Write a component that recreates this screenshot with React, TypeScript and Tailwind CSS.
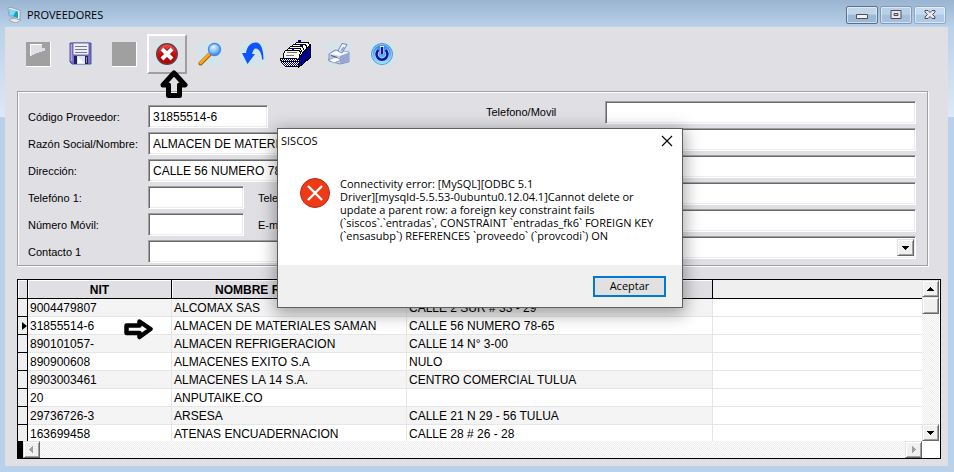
import React from "react";

const suppliers = [
  { nit: "9004479807", name: "ALCOMAX SAS", address: "CALLE 2 SUR # 33 - 29" },
  { nit: "31855514-6", name: "ALMACEN DE MATERIALES SAMAN", address: "CALLE 56 NUMERO 78-65" },
  { nit: "890101057-", name: "ALMACEN REFRIGERACION", address: "CALLE 14 N° 3-00" },
  { nit: "890900608", name: "ALMACENES EXITO S.A", address: "NULO" },
  { nit: "8903003461", name: "ALMACENES LA 14 S.A.", address: "CENTRO COMERCIAL TULUA" },
  { nit: "20", name: "ANPUTAIKE.CO", address: "" },
  { nit: "29736726-3", name: "ARSESA", address: "CALLE 21 N 29 - 56 TULUA" },
  { nit: "163699458", name: "ATENAS ENCUADERNACION", address: "CALLE 28 # 26 - 28" },
];

const currentNit = "31855514-6";

const sunken =
  "h-[23px] border border-t-[#a0a0a0] border-l-[#a0a0a0] border-b-white border-r-white bg-white shadow-[inset_1px_1px_0_#696969,inset_-1px_-1px_0_#ececec]";
const raised =
  "flex h-[17px] w-[17px] shrink-0 items-center justify-center border border-t-[#e3e3e3] border-l-[#e3e3e3] border-b-[#696969] border-r-[#696969] bg-[#f0f0f0] shadow-[inset_1px_1px_0_#fff,inset_-1px_-1px_0_#a0a0a0]";
const track = "bg-[repeating-conic-gradient(#ececec_0_25%,#ffffff_0_50%)] bg-[length:2px_2px]";
const arialStack = "font-['Liberation_Sans',Arial,sans-serif]";
const segoeStack = "font-['Open_Sans',sans-serif]";

function Field({
  id,
  label,
  value = "",
  width,
  children,
}: {
  id: string;
  label: string;
  value?: string;
  width: string;
  children?: React.ReactNode;
}) {
  return (
    <div className="flex items-center">
      <label htmlFor={id} className="w-[120px] shrink-0">
        {label}
      </label>
      <input id={id} type="text" defaultValue={value} className={`${sunken} ${width} ${arialStack} px-1 text-[12px] outline-none`} />
      {children}
    </div>
  );
}

function Triangle({ dir, color = "#000" }: { dir: "up" | "down" | "left" | "right"; color?: string }) {
  const paths = {
    up: "M0 6h7v-1h-1v-1h-1v-1h-1v-1h-1v1h-1v1h-1v1h-1z",
    down: "M0 2h7v1h-1v1h-1v1h-1v1h-1v-1h-1v-1h-1v-1h-1z",
    left: "M5 0v7h-1v-1h-1v-1h-1v-1h-1v-1h1v-1h1v-1h1v-1z",
    right: "M2 0v7h1v-1h1v-1h1v-1h1v-1h-1v-1h-1v-1h-1v-1z",
  };
  return (
    <svg width="7" height="7" viewBox="0 0 7 7" fill={color} shapeRendering="crispEdges">
      <path d={paths[dir]} />
    </svg>
  );
}

function MonitorIcon() {
  return (
    <svg width="16" height="16" viewBox="0 0 16 16">
      <path d="M3 12l6-1 5 2-5 3-6-2z" fill="#e9e9e4" stroke="#8f969c" strokeWidth=".7" />
      <path d="M1 1l3-.5 9 3v8l-2 1-9-4z" fill="#f2f6f8" stroke="#7c8c99" strokeWidth=".7" />
      <path d="M2 2l9 2.500v7l-8.500-3.500z" fill="#1c9ecb" />
      <path d="M2 2l7 2-3 5-3.500-1.500z" fill="#7fdcf2" />
    </svg>
  );
}

function NewIcon() {
  return (
    <svg width="26" height="26" viewBox="0 0 26 26" shapeRendering="crispEdges">
      <path d="M1 1h25v25h-25z" fill="#fff" />
      <path d="M1 1h24v24h-24z" fill="#a0a0a0" />
      <path d="M5 3h12v4h3v3h-3v1h-3v1h-3v1h-2v1h-2v1h-2z" fill="#e0dfe4" />
      <path d="M5 3.500h12M5.500 3v11" stroke="#fff" fill="none" />
    </svg>
  );
}

function DisabledIcon() {
  return (
    <svg width="26" height="26" viewBox="0 0 26 26" shapeRendering="crispEdges">
      <path d="M1 1h25v25h-25z" fill="#fff" />
      <path d="M1 1h24v24h-24z" fill="#a0a0a0" />
    </svg>
  );
}

function SaveIcon() {
  return (
    <svg width="24" height="24" viewBox="0 0 24 24">
      <path d="M0 0h24v24h-24z" fill="#d4e5e9" />
      <path d="M1 1h21v21h-19l-2-2z" fill="#7a6fc4" stroke="#5a4e9b" />
      <path d="M2.500 2v17" stroke="#b0a4ea" strokeWidth="1.500" />
      <path d="M4 1h16v12h-16z" fill="#eeeef6" stroke="#5a4e9b" strokeWidth=".8" />
      <path d="M6 4.500h12M6 7.500h12M6 10.500h12" stroke="#77778e" />
      <path d="M5 14h14v8h-14z" fill="#20205a" />
      <path d="M8 14h8v8h-8z" fill="#dfe5ef" />
      <path d="M9 15l6 6h-6z" fill="#fff" />
      <path d="M17 15h1v6h-1z" fill="#8d86c7" />
    </svg>
  );
}

function DeleteIcon() {
  return (
    <svg width="24" height="24" viewBox="0 0 24 24">
      <defs>
        <linearGradient id="del" x1="0" y1="0" x2="0" y2="1">
          <stop offset="0" stopColor="#ef5a55" />
          <stop offset=".5" stopColor="#cf0b0b" />
          <stop offset="1" stopColor="#b00000" />
        </linearGradient>
      </defs>
      <path d="M0 0h24v24h-24z" fill="#d4e5e9" />
      <circle cx="12" cy="12" r="10.300" fill="url(#del)" stroke="#6e3a44" strokeWidth="1.400" />
      <path d="M7.500 7.500l9 9M16.500 7.500l-9 9" stroke="#8c1010" strokeWidth="5.500" />
      <path d="M7 7l10 10M17 7l-10 10" stroke="#fff" strokeWidth="4" />
    </svg>
  );
}

function SearchIcon() {
  return (
    <svg width="24" height="24" viewBox="0 0 24 24">
      <defs>
        <radialGradient id="lens" cx=".4" cy=".3" r=".7">
          <stop offset="0" stopColor="#e4f5ff" />
          <stop offset=".6" stopColor="#7fbdf8" />
          <stop offset="1" stopColor="#3d7fe8" />
        </radialGradient>
      </defs>
      <path d="M0 0h24v24h-24z" fill="#d4e5e9" />
      <path d="M2.500 21.500l9-9" stroke="#a95e05" strokeWidth="4" strokeLinecap="round" />
      <path d="M2.500 21l9-9" stroke="#f9aa1c" strokeWidth="2.500" strokeLinecap="round" />
      <circle cx="16.500" cy="7.500" r="6" fill="url(#lens)" stroke="#4a86e6" strokeWidth="1.300" />
    </svg>
  );
}

function UndoIcon() {
  return (
    <svg width="24" height="24" viewBox="0 0 24 24">
      <path d="M0 0h24v24h-24z" fill="#d4e5e9" />
      <path d="M1 11h4c1-6 4-10.500 10-10.500 5 0 7.500 7 7.500 17h-1.500c0-6-3-11-6-11-2 0-3 2-4 5.500h3l-7.500 10z" fill="#0b55ff" />
    </svg>
  );
}

function FileBoxIcon() {
  return (
    <svg width="32" height="30" viewBox="0 0 32 30" shapeRendering="crispEdges">
      <defs>
        <pattern id="weave" width="2" height="2" patternUnits="userSpaceOnUse">
          <path d="M0 0h2v2h-2z" fill="#fff" />
          <path d="M0 0h1v1h-1zM1 1h1v1h-1z" fill="#00009c" />
        </pattern>
      </defs>
      <path d="M14 4h14l3 2-9 15h-17v-7z" fill="#fff" />
      <path d="M16.500 3.500h12l1 3M13.500 5.500h12l2 4M10.500 7.500h12l2 5M8.500 9.500h12l2 5" fill="none" stroke="#000" />
      <path d="M14.500 5.500l2-2M11.500 7.500l2-2M8.500 9.500l2-2M5.500 12.500l3-3" stroke="#000" />
      <path d="M18 1h3v2h-3zM20 6h3v1h-3zM12 9h2v2h-2z" fill="#00009c" />
      <path d="M3.500 20.500v-6l2-3h14l1 2-2 7z" fill="#f5f5f5" stroke="#000" />
      <path d="M7 13.500h10M6 16.500h8" stroke="#777" />
      <path d="M19.500 17.500l11-12v13l-12 10z" fill="#00008a" stroke="#000" />
      <path d="M.5 19.500h16l3 2-1 6h-13l-4-4z" fill="url(#weave)" stroke="#000" />
      <path d="M2 22.500h17" stroke="#000" />
    </svg>
  );
}

function PrinterIcon() {
  return (
    <svg width="24" height="24" viewBox="0 0 24 24">
      <path d="M0 0h24v24h-24z" fill="#d4e5e9" />
      <path d="M2 12l6-4 14 2v10l-9 2-11-3z" fill="#c1c9e6" stroke="#7d88b4" strokeWidth=".9" />
      <path d="M3 12l6-3 13 1-9 4z" fill="#f6f8ff" />
      <path d="M13 14l9-3v8l-9 3z" fill="#98a6d3" />
      <path d="M15 1.500l5 1-5 8.500-4-2z" fill="#f4f7ff" stroke="#7180ba" />
      <path d="M17 5l-3 4" stroke="#8fa4df" strokeWidth="2" />
      <path d="M1 18l8-3 5 3-7 3z" fill="#fff" stroke="#8490b8" strokeWidth=".8" />
      <path d="M4 13.500l6 2" stroke="#414f83" />
    </svg>
  );
}

function PowerIcon() {
  return (
    <svg width="24" height="24" viewBox="0 0 24 24">
      <defs>
        <linearGradient id="pow" x1="0" y1="0" x2="0" y2="1">
          <stop offset="0" stopColor="#2f83e8" />
          <stop offset=".5" stopColor="#4ba5f4" />
          <stop offset="1" stopColor="#8ff0ff" />
        </linearGradient>
      </defs>
      <path d="M0 0h24v24h-24z" fill="#d4e5e9" />
      <circle cx="12" cy="12" r="10.500" fill="url(#pow)" stroke="#5f94cf" />
      <circle cx="12" cy="12" r="9.500" fill="none" stroke="#a5dcff" strokeWidth=".8" />
      <path d="M8.500 8a5.500 5.500 0 1 0 7 0" fill="none" stroke="#bfe4ff" strokeWidth="4" />
      <path d="M12 4v8" stroke="#e6f6ff" strokeWidth="4" />
      <path d="M8.500 8a5.500 5.500 0 1 0 7 0" fill="none" stroke="#1212a8" strokeWidth="2.600" />
      <path d="M12 5v7" stroke="#1212a8" strokeWidth="2.600" />
    </svg>
  );
}

const tools = [
  { name: "Nuevo", Icon: NewIcon, active: false },
  { name: "Guardar", Icon: SaveIcon, active: false },
  { name: "Modificar", Icon: DisabledIcon, active: false },
  { name: "Eliminar", Icon: DeleteIcon, active: true },
  { name: "Buscar", Icon: SearchIcon, active: false },
  { name: "Deshacer", Icon: UndoIcon, active: false },
  { name: "Archivo", Icon: FileBoxIcon, active: false },
  { name: "Imprimir", Icon: PrinterIcon, active: false },
  { name: "Salir", Icon: PowerIcon, active: false },
];

function TitleBar() {
  const caption =
    "flex h-[18px] w-8 items-center justify-center rounded-[2px] border shadow-[inset_0_0_0_1px_rgba(255,255,255,0.5)]";
  return (
    <header className="flex h-[27px] items-start justify-between pr-2 pl-[7px]">
      <div className="flex h-[30px] items-center gap-1">
        <MonitorIcon />
        <h1 className={`${segoeStack} text-[11px] leading-4 text-black`}>PROVEEDORES</h1>
      </div>
      <div className="flex gap-0.5 pt-1.5">
        <button aria-label="Minimizar" className={`${caption} border-[#5d6e89] bg-linear-to-b from-[#c2d6ea] from-45% to-[#9db8d4] to-50%`}>
          <svg width="12" height="12" viewBox="0 0 12 12">
            <path d="M.5 5.500h11v4h-11z" fill="#f2f2f2" stroke="#4c4d5e" />
          </svg>
        </button>
        <button aria-label="Maximizar" className={`${caption} border-[#8299b8] bg-linear-to-b from-[#b9cfe6] from-45% to-[#a5bfdc] to-50%`}>
          <svg width="12" height="12" viewBox="0 0 12 12">
            <path fillRule="evenodd" d="M1 1.500h10v8h-10zM4 4.500v2h4v-2z" fill="#e8e8e8" stroke="#4c4d5e" />
          </svg>
        </button>
        <button aria-label="Cerrar ventana" className={`${caption} border-[#8fa8c8] bg-linear-to-b from-[#c6dbf1] from-45% to-[#b0cae6] to-50%`}>
          <svg width="12" height="12" viewBox="0 0 12 12">
            <path d="M1 1.500h3l2 2 2-2h3v1.500l-2.500 2.500 2.500 2.500v1.500h-3l-2-2-2 2h-3v-1.500l2.500-2.500-2.500-2.500z" fill="#e8e8e8" stroke="#4c4d5e" />
          </svg>
        </button>
      </div>
    </header>
  );
}

function SupplierForm() {
  const side = "ml-3.5";
  return (
    <section className={`${arialStack} mt-[17px] mr-5 ml-3 flex border border-[#a0a0a0] pr-[11px] pb-0.5 pl-2.5 text-[11px] leading-4 text-black shadow-[1px_1px_0_#fff,inset_1px_1px_0_#fff]`}>
      <div className="flex w-[458px] shrink-0 flex-col gap-1 pt-[13px]">
        <Field id="codigo" label="Código Proveedor:" value="31855514-6" width="w-[120px]" />
        <Field id="razon" label="Razón Social/Nombre:" value="ALMACEN DE MATERIALES SAMAN" width="w-[300px]" />
        <Field id="direccion" label="Dirección:" value="CALLE 56 NUMERO 78-65" width="w-[300px]" />
        <Field id="telefono1" label="Telefóno 1:" width="w-24">
          <span className={side}>Telefóno 2:</span>
        </Field>
        <Field id="movil" label="Número Móvil:" width="w-24">
          <span className={side}>E-mail:</span>
        </Field>
        <Field id="contacto" label="Contacto 1" width="w-[300px]" />
      </div>
      <div className="flex min-w-0 flex-1 pt-[9px]">
        <label htmlFor="telmovil" className="mt-[3px] w-[119px] shrink-0">
          Telefono/Movil
        </label>
        <div className="flex min-w-0 flex-1 flex-col gap-1">
          <input id="telmovil" type="text" className={`${sunken} w-full px-1 outline-none`} />
          <input aria-label="Dato 2" type="text" className={`${sunken} w-full px-1 outline-none`} />
          <input aria-label="Dato 3" type="text" className={`${sunken} w-full px-1 outline-none`} />
          <input aria-label="Dato 4" type="text" className={`${sunken} w-full px-1 outline-none`} />
          <input aria-label="Dato 5" type="text" className={`${sunken} w-full px-1 outline-none`} />
          <div className={`${sunken} flex items-center p-px`}>
            <select aria-label="Dato 6" className="h-4 min-w-0 flex-1 appearance-none bg-transparent px-1 outline-none">
              <option></option>
            </select>
            <span className={raised}>
              <Triangle dir="down" />
            </span>
          </div>
        </div>
      </div>
    </section>
  );
}

function SupplierGrid() {
  const head = "h-[19px] border-r border-b border-black bg-[#e0dfe4] px-0 pt-px pb-0 text-center font-bold shadow-[inset_1px_1px_0_#fff]";
  const cell = "h-[18px] border-r border-b border-[#e6e6e6] pt-px pr-0 pb-0 pl-0.5 whitespace-nowrap";
  return (
    <section className={`${arialStack} mt-[13px] mr-[7px] mb-[7px] ml-3 border border-black bg-white text-[12px] leading-4 text-black`}>
      <div className="flex h-[161px]">
        <div className="min-w-0 flex-1 overflow-hidden">
          <table className="w-full table-fixed border-separate border-spacing-0">
            <colgroup>
              <col className="w-2.5" />
              <col className="w-36" />
              <col className="w-[235px]" />
              <col className="w-[306px]" />
              <col />
            </colgroup>
            <thead>
              <tr>
                <th aria-label="Registro" className={head} />
                <th className={head}>NIT</th>
                <th className={head}>NOMBRE RAZON SOCIAL</th>
                <th aria-label="Dirección" className={head} />
                <th aria-label="Otros" className="h-[19px] border-b border-black bg-[#efefef] p-0" />
              </tr>
            </thead>
            <tbody>
              {suppliers.map((s, i) => (
                <tr key={s.nit} className={i % 2 === 0 ? "bg-[#f4f4f4]" : "bg-white"}>
                  <td className="h-[18px] border-r border-b border-black bg-[#efefef] p-0">
                    {s.nit === currentNit && (
                      <svg width="5" height="8" viewBox="0 0 5 8" className="ml-auto block">
                        <path d="M0 0l5 4-5 4z" />
                      </svg>
                    )}
                  </td>
                  <td className={cell}>{s.nit}</td>
                  <td className={cell}>{s.name}</td>
                  <td className={cell}>{s.address}</td>
                  <td className="h-[18px] border-b border-[#e6e6e6] bg-white p-0" />
                </tr>
              ))}
            </tbody>
          </table>
        </div>
        <div className={`${track} mr-px flex w-[17px] flex-col`}>
          <button aria-label="Subir" className={raised}>
            <Triangle dir="up" />
          </button>
          <div className={raised} />
          <button aria-label="Bajar" className={`${raised} mt-auto`}>
            <Triangle dir="down" />
          </button>
        </div>
      </div>
      <div className="flex h-[17px]">
        <div className="w-[5px] bg-black" />
        <div className={`${track} mr-[18px] flex flex-1 justify-between`}>
          <button aria-label="Izquierda" className={raised}>
            <Triangle dir="left" color="#a0a0a0" />
          </button>
          <button aria-label="Derecha" className={raised}>
            <Triangle dir="right" color="#a0a0a0" />
          </button>
        </div>
      </div>
    </section>
  );
}

function ErrorDialog() {
  return (
    <div
      role="alertdialog"
      aria-labelledby="dlg-title"
      aria-describedby="dlg-text"
      className={`${segoeStack} absolute top-32 left-[277px] w-[406px] border border-[#5f5f5f] bg-white text-[11px] text-black shadow-[0_4px_16px_2px_rgba(0,0,0,0.35)]`}
    >
      <div className="flex h-6 items-center justify-between pr-2 pl-[3px]">
        <h2 id="dlg-title" className="leading-4">SISCOS</h2>
        <button aria-label="Cerrar">
          <svg width="14" height="12" viewBox="0 0 14 12" fill="none" stroke="#000" strokeWidth="1.100">
            <path d="M2 1l10 10M12 1l-10 10" />
          </svg>
        </button>
      </div>
      <div className="flex h-28 gap-2.5 pt-6 pl-[22px]">
        <svg width="30" height="30" viewBox="0 0 30 30" className="mt-px shrink-0">
          <circle cx="15" cy="15" r="14.500" fill="#f03a17" stroke="#b2291c" />
          <path d="M8 8l14 14M22 8l-14 14" stroke="#fff" strokeWidth="2.400" />
        </svg>
        <p id="dlg-text" className="leading-[13px] whitespace-nowrap">
          Connectivity error: [MySQL][ODBC 5.1
          <br />
          Driver][mysqld-5.5.53-0ubuntu0.12.04.1]Cannot delete or
          <br />
          update a parent row: a foreign key constraint fails
          <br />
          (`siscos`.`entradas`, CONSTRAINT `entradas_fk6` FOREIGN KEY
          <br />
          (`ensasubp`) REFERENCES `proveedo` (`provcodi`) ON
        </p>
      </div>
      <div className="flex h-[42px] items-center justify-end bg-[#f0f0f0] pr-4">
        <button className="h-[21px] w-[73px] border-2 border-[#0078d7] bg-[#e1e1e1] leading-4">Aceptar</button>
      </div>
    </div>
  );
}

function MarkerUp() {
  return (
    <svg width="28" height="28" viewBox="0 0 28 28" className="absolute top-[70px] left-40">
      <path d="M14 3l11 12h-5.500v10.500h-11v-10.500h-5.500z" fill="none" stroke="#000" strokeWidth="5" strokeLinejoin="round" />
    </svg>
  );
}

function MarkerRight() {
  return (
    <svg width="30" height="22" viewBox="0 0 30 22" className="absolute top-[318px] left-[124px]">
      <path d="M2.500 7.500h13v-4l11 7.500-11 8v-4h-13z" fill="none" stroke="#000" strokeWidth="4.500" strokeLinejoin="round" />
    </svg>
  );
}

export default function App() {
  return (
    <main className="relative w-full bg-[linear-gradient(#9ab4d1_0px,#b9d1ea_27px,#dde9f6_117px,#b9d1ea_117px)] pb-1.5">
      <TitleBar />
      <div className="mr-1.5 ml-[5px] flow-root bg-[#e0dfe4]">
        <nav aria-label="Herramientas" className="mt-[7px] ml-[13px] flex gap-[3px]">
          {tools.map(({ name, Icon, active }) => (
            <button
              key={name}
              aria-label={name}
              className={
                active
                  ? "flex size-10 items-center justify-center border-2 border-t-white border-l-white border-r-[#a0a0a0] border-b-[#a0a0a0]"
                  : "flex size-10 items-center justify-center"
              }
            >
              <Icon />
            </button>
          ))}
        </nav>
        <SupplierForm />
        <SupplierGrid />
      </div>
      <MarkerUp />
      <MarkerRight />
      <ErrorDialog />
    </main>
  );
}
